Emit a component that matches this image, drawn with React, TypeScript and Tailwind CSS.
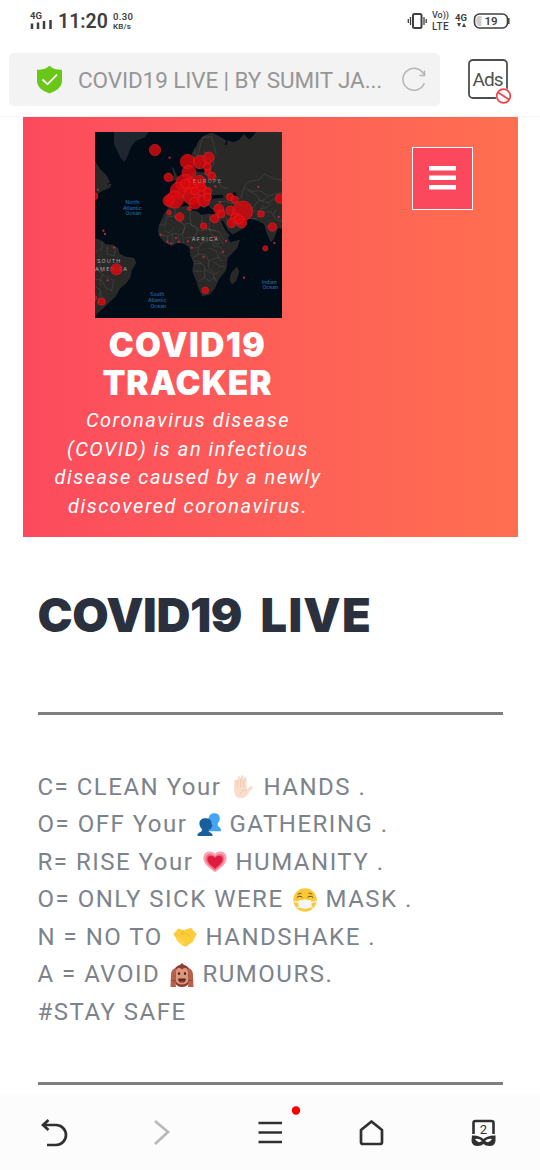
import React from "react";

const seaLabel = "fill-[#245c91] font-[Inter] text-[15px] font-semibold";
const landLabel = "fill-[#aaaaaa] font-[Inter] text-[16px]";

const cases: [number, number, number][] = [
  [195, 66, 17], [235, 148, 13], [293, 101, 22], [330, 102, 20], [356, 89, 17], [352, 117, 12], [353, 133, 9], [365, 144, 12],
  [297, 133, 21], [284, 166, 27], [265, 187, 24], [254, 215, 26], [236, 218, 17], [303, 175, 23], [305, 205, 25], [328, 160, 18],
  [330, 184, 20], [315, 225, 18], [342, 218, 18], [353, 190, 12], [352, 207, 12], [286, 167, 14], [315, 189, 12], [333, 177, 13],
  [237, 254, 7], [269, 267, 13], [298, 242, 6], [341, 294, 10], [374, 272, 13], [386, 243, 15], [393, 258, 12], [420, 207, 11],
  [434, 215, 11], [421, 248, 14], [458, 249, 30], [436, 270, 15], [425, 285, 14], [455, 285, 15], [447, 274, 14], [513, 258, 10],
  [569, 212, 14], [547, 297, 13], [526, 361, 8], [346, 487, 10], [79, 424, 17], [35, 521, 11], [14, 205, 10], [12, 510, 8],
];

const specks: [number, number][] = [
  [239, 89], [376, 175], [390, 222], [505, 177], [566, 267], [553, 345], [40, 308], [45, 318], [24, 185], [72, 358], [53, 457], [36, 428],
  [212, 320], [232, 341], [243, 346], [258, 330], [266, 342], [294, 340], [305, 359], [341, 387], [374, 328], [408, 339], [399, 372], [462, 449],
];

function WorldMap() {
  return (
    <svg className="ml-[1px] block h-[186px] w-[187px]" viewBox="15 12 561 558" preserveAspectRatio="none">
      <rect x="15" y="12" width="561" height="558" fill="#020c17" />
      <path d="M72 12H176L165 28 138 38 124 54 114 82 104 101 92 91 81 66 72 48Z" fill="#202630" />
      <g fill="#292928" stroke="#3d3d3c" strokeWidth="1.5" strokeLinejoin="round">
        <path d="M15 101 28 122 49 143 58 162 46 173 63 168 60 178 38 187 15 201Z" />
        <path d="M15 332 34 338 47 350 70 352 84 362 88 378 108 388 132 391 137 405 124 427 119 451 105 468 89 481 76 505 60 520 46 534 33 546 15 561Z" />
        <path d="M307 75 318 60 326 40 341 25 365 15 385 25 408 38 401 53 413 51 414 38 430 44 449 36 461 20 478 36 500 12H576V300L563 299 550 333 543 341 531 315 523 287 505 278 478 270 459 275 468 286 461 299 434 315 411 328 399 300 387 280 374 268 379 244 365 243 354 230 342 240 325 219 302 212 290 220 275 219 259 238 235 239 226 229 229 205 253 201 264 174 284 154 302 139 318 133 343 135 355 118 345 100 333 105 329 121 314 120Z" />
        <path d="M247 118 260 143 266 151 244 160 254 141Z" />
        <path d="M234 242 264 239 300 233 305 249 323 252 334 262 357 258 385 265 393 292 410 326 421 344 448 337 440 360 412 390 407 426 385 455 372 483 357 499 337 503 328 484 320 458 308 429 312 404 302 381 300 359 285 347 264 343 245 352 225 343 211 327 205 311 208 291 223 260Z" />
        <path d="M441 418 446 431 437 459 426 468 420 456 425 434Z" />
      </g>
      <g fill="none" stroke="#6a6668" strokeWidth="1.3" strokeOpacity=".72">
        <path d="M211 290 225 292 230 268 250 264 281 289 299 286 327 309 354 305 378 308M256 243 253 267 286 294 276 319 249 316 232 325 211 320M286 294 277 325 282 346M300 252 303 290 324 300 315 326 285 330M336 261V298L358 302 366 323 387 328 400 350M359 261 357 304 389 312 401 335M314 330 331 346 364 336 372 355 389 356 402 371M300 360 325 359 337 344M325 359 324 379 308 389M324 379 346 379 356 398 383 389 398 400M312 408 334 405 344 418 344 450 326 459M356 398 356 420 374 438 389 430M344 425 369 438 376 458M344 450 359 460 371 449 383 459M311 429 337 430" />
        <path d="M232 325 236 350M247 319 250 350M264 320 270 345M225 310 238 314 250 303M366 332 378 349 390 344M356 360 379 368 386 390M386 371 407 386M309 400 323 399 334 405M337 383 346 390M370 400 388 414 405 417" />
        <path d="M37 340 35 364 15 371M53 353 51 379 73 383 77 360M15 392 33 404 24 426 38 439 53 449 72 457 65 489M15 453 34 456 48 480 67 489M30 492 44 528M38 439 29 460 34 475M15 475 32 485 22 531" />
        <path d="M267 177 286 187 300 178 320 189 340 178 361 188M250 205 273 214 292 196 306 210 320 196 340 204 365 190M314 60 315 78 324 80 337 28 365 26 373 57 379 82M339 71 354 76 372 108 357 127 378 142 392 175 413 183" />
        <path d="M380 222 408 220 438 229 460 232 486 244 503 220 524 215 535 203 576 193M438 216 454 208 463 174 474 162 510 154 523 138 551 151 576 158M476 189 498 199 511 217 534 225 552 213M462 180 487 190 510 188 533 202M411 237 427 260 446 264 454 280M397 258 417 281 433 299M469 270 500 272 519 252 543 252 559 275 576 279M486 247 507 251 522 231M515 242 532 238 544 225M559 244 549 260" />
      </g>
      <g fill="none" stroke="#020c17" strokeLinecap="round">
        <path d="m397 281 14 27 21 22" strokeWidth="7" />
        <path d="m439 265 15 14 18-2" strokeWidth="5" />
        <path d="m370 207 25-2" strokeWidth="10" />
        <path d="m433 198 7 17" strokeWidth="10" />
        <path d="m324 216 21 18" strokeWidth="4" />
      </g>
      <text x="305" y="338" className={landLabel} textLength="79">AFRICA</text>
      <text x="21" y="404" className={landLabel} textLength="70">SOUTH</text>
      <text x="15" y="429" className={landLabel} textLength="96">AMERICA</text>
      <g fill="#db090d" fillOpacity=".82" stroke="#f02a2d" strokeWidth="2" strokeOpacity=".7">
        {cases.map(([x, y, r], i) => <circle key={i} cx={x} cy={y} r={r} />)}
      </g>
      <text x="309" y="166" className={landLabel} fillOpacity=".75" textLength="84">EUROPE</text>
      <g fill="#a52c3d">{specks.map(([x, y], i) => <circle key={i} cx={x} cy={y} r="3.5" />)}</g>
      <g className={seaLabel} textAnchor="middle">
        <text x="127" y="227">North</text><text x="127" y="245">Atlantic</text><text x="130" y="262">Ocean</text>
        <text x="202" y="504">South</text><text x="202" y="522">Atlantic</text><text x="205" y="540">Ocean</text>
        <text x="538" y="467">Indian</text><text x="541" y="484">Ocean</text>
      </g>
    </svg>
  );
}

function Hand() {
  return (
    <svg className="size-6" viewBox="0 0 24 24">
      <g fill="none" stroke="#fadcc9" strokeLinecap="round">
        <path d="M4.700 6v10M7.900 2.500V14M11.200 1.700V14M14.200 3.700V15" strokeWidth="2.700" />
        <path d="m13.500 19 6.800-6.400" strokeWidth="3" />
      </g>
      <path d="M3.400 11h12.200v6l3.300-2-1 2.500c-1.800 3.500-3.900 5.500-8.400 5.500-4.100 0-6.100-3-6.100-7Z" fill="#fadcc9" />
      <path d="M6.300 5v7M9.600 3.500V12M12.700 4.500V12M9.500 18.500c1.700-3 3.500-4 6-3.300" fill="none" stroke="#e6bfa9" strokeWidth=".8" />
    </svg>
  );
}

function People() {
  return (
    <svg className="size-6" viewBox="0 0 24 24">
      <path d="M17.300.3c4 0 6 2.700 5.400 6.100-.2 1.700-1 2.700-1.900 3.700v2.500c0 1.100 3.200 1.800 3.200 4.600v1H11V5.700l.6-.8C12.200 2 14.100.3 17.300.3Z" fill="#42a5f5" />
      <path d="M8.400 5.200c4.400 0 6.600 2.500 6.200 6l1.100 2.100-1.300.7c-.2 2-.8 2.700-2.700 2.700v1.600c.4 1.200 4 1.500 4 4.700H.4c0-3.700 4-3.900 4.400-5.300v-2c-1.400-1-2.400-2.900-2.400-5.100 0-3.400 2.300-5.400 6-5.400Z" fill="#1a5f9c" />
    </svg>
  );
}

function Heart() {
  return (
    <svg className="size-6" viewBox="0 0 24 24">
      <path d="M12 22.200C6 18 .3 13.600.3 7.900.3 1.400 8-.5 12 4 16-.5 23.700 1.400 23.700 7.900c0 5.700-5.700 10.100-11.700 14.300Z" fill="#f6a4b4" />
      <path d="M12 20.600C7.100 16.700 2.600 13 2.600 8.600c0-4.900 6.200-6.200 9.400-1.900 3.200-4.300 9.400-3 9.400 1.900 0 4.400-4.500 8.100-9.400 12Z" fill="#ef6981" />
      <path d="M12 18.800c-3.900-3.100-7.600-6.200-7.600-9.700 0-3.900 5.400-4.500 7.600-1 2.200-3.500 7.600-2.900 7.600 1 0 3.500-3.700 6.600-7.600 9.700Z" fill="#df1b3d" />
    </svg>
  );
}

function Mask() {
  return (
    <svg className="size-6" viewBox="0 0 24 24">
      <circle cx="12" cy="12" r="11.700" fill="#fcc936" />
      <path d="m.7 13.500 5.500 1M23.300 13.500l-5.500 1M3.500 20l4-1.700M20.500 20l-4-1.700" stroke="#e8edf0" strokeWidth="1.300" />
      <path d="M5.500 12.500c3.300-.2 4.300-1 6.500-1s3.200.8 6.500 1v6.300c-2 1.300-3.900 1.900-6.500 1.900s-4.500-.6-6.500-1.900Z" fill="#f3f6f7" />
      <path d="M4.200 9.200c1.500-1.300 3.700-1.300 5 0m5.600 0c1.300-1.300 3.500-1.300 5 0M5 6.200c1-.7 2-.9 3-.9M19 6.200c-1-.7-2-.9-3-.9" fill="none" stroke="#5b4637" strokeWidth="1" strokeLinecap="round" />
    </svg>
  );
}

function Handshake() {
  return (
    <svg className="size-6" viewBox="0 0 24 24">
      <path d="m.3 9 5-5.500 5.100 1.800 2-.6 5.500-2 5.800 6.500-3 5.300-.7 2.100-6 4.400-2.700.4-3-1.600-4.600-4.600-.7-2.300Z" fill="#fdcc3a" />
      <path d="m11 5-3 4c1.500 1 2.700.1 4-1.400l5.500 4" fill="none" stroke="#f0b22a" strokeWidth=".8" />
      <path d="m4 13 2-1 1 2 2-.5v2l2 .3-.2 2 1.700.4-1.300 2.100-3-1.200Z" fill="#ffd654" />
    </svg>
  );
}

function Monkey() {
  return (
    <svg className="size-6" viewBox="0 0 24 24">
      <path d="M4 9c0-4 3-6.500 6-7l2-2 2 2c3 .5 6 3 6 7l1 5-2 6c-2 3-4 4-7 4s-5-1-7-4l-2-6Z" fill="#8c3e33" />
      <path d="M6 7c1.500-2.500 4-2.500 6-.5 2-2 4.500-2 6 .5 1 2 .7 4 0 5.300 1.500 5.500-.5 9.200-6 9.200s-7.500-3.700-6-9.200C5.300 11 5 9 6 7Z" fill="#df967b" />
      <path d="M.5 24 1 12C1 7.500 3.500 5 5.600 5.500c1.300.3 1 2 .3 3.500L5.200 15l.8 9Z" fill="#b6614b" />
      <path d="m23.500 24-.5-12c0-4.500-2.500-7-4.600-6.500-1.300.3-1 2-.3 3.500l.7 6-.8 9Z" fill="#b6614b" />
      <path d="M1.200 17.500H5.500M22.800 17.500h-4.300" stroke="#8c3e33" strokeWidth=".8" />
      <ellipse cx="9" cy="10.500" rx="1.100" ry="1.600" fill="#372c2c" /><ellipse cx="15" cy="10.500" rx="1.100" ry="1.600" fill="#372c2c" />
      <path d="M8 15.500h8c-.5 3-1.600 4.300-4 4.300s-3.500-1.300-4-4.300Z" fill="#532b29" />
      <path d="M10 18.800c1-.8 3-.8 4 0-.8 1.100-3.200 1.100-4 0Z" fill="#ed4d4c" />
    </svg>
  );
}

const rows: { before: string; Icon: () => React.ReactElement; after: string; lead: string }[] = [
  { before: "C= CLEAN Your", Icon: Hand, after: "HANDS .", lead: "w-[193px]" },
  { before: "O= OFF Your", Icon: People, after: "GATHERING .", lead: "w-[159px]" },
  { before: "R= RISE Your", Icon: Heart, after: "HUMANITY .", lead: "w-[165px]" },
  { before: "O= ONLY SICK WERE", Icon: Mask, after: "MASK .", lead: "w-[255px]" },
  { before: "N = NO TO", Icon: Handshake, after: "HANDSHAKE .", lead: "w-[135px]" },
  { before: "A = AVOID", Icon: Monkey, after: "RUMOURS.", lead: "w-[132px]" },
];

function StatusBar() {
  return (
    <div className="flex h-[53px] items-start justify-between px-[30px] pt-[10px] text-[#3f3f3f]">
      <div className="flex">
        <div className="w-[28px] pt-[1px]">
          <div className="text-[9.500px] leading-[9px] font-bold">4G</div>
          <svg className="h-[10px] w-[22px]" viewBox="0 0 22 10"><path d="M2 3.500V9M8 2.500V9M14 1V9M20.500 0V9" stroke="currentColor" strokeWidth="2.500" /></svg>
        </div>
        <div className="w-[55px] pt-px text-[19.500px] leading-[22px] font-semibold">11:20</div>
        <div className="flex flex-col pt-px font-semibold"><div className="text-[9.500px] leading-[11px] tracking-[.3px]">0.30</div><div className="text-[8px] leading-[9.500px] tracking-[.2px]">KB/s</div></div>
      </div>
      <div className="flex">
        <svg className="mt-[2px] h-[18px] w-[20px]" viewBox="0 0 20 18" fill="none" stroke="currentColor"><rect x="6" y="2" width="8.500" height="14" rx="1.500" strokeWidth="2" /><path d="M3.500 5v8M17 5v8M1.300 7v4M19.200 7v4" strokeWidth="1.300" /></svg>
        <div className="ml-[5px] w-[22px] font-medium whitespace-nowrap"><div className="text-[9px] leading-[11px]">Vo))</div><div className="text-[10px] leading-[12px] tracking-[.3px]">LTE</div></div>
        <div className="ml-px w-[18px] pt-[3px] text-[9.500px] leading-[9px] font-bold"><div>4G</div><svg className="ml-[2px] h-[6px] w-[10px]" viewBox="0 0 10 6"><path d="M0 1h4L2 5ZM5 5h4L7 1Z" fill="currentColor" /></svg></div>
        <svg className="mt-[3px] h-[16px] w-[37px]" viewBox="0 0 37 16"><rect x="1.500" y="1" width="33" height="14" rx="5" fill="none" stroke="currentColor" strokeWidth="1.600" /><path d="M5.500 3h3v10h-3c-3 0-3-10 0-10Z" fill="#cecece" /><path d="M35.800 5v6" stroke="currentColor" strokeWidth="1.500" /><text x="18" y="12" textAnchor="middle" className="fill-current text-[11.500px] font-semibold">19</text></svg>
      </div>
    </div>
  );
}

export default function App() {
  return (
    <div className="flex h-[1170px] w-[540px] flex-col overflow-hidden bg-white font-[Roboto,sans-serif]">
      <StatusBar />
      <div className="flex h-[64px] shrink-0 items-start border-b border-[#f3f3f3] pl-[9px]">
        <div className="flex h-[53px] w-[431px] items-center rounded-[5px] bg-[#f3f3f3] pl-[27px]">
          <svg className="h-[29px] w-[27px]" viewBox="0 0 27 29"><path d="M13.500.7C17 3.800 20.500 4.700 26 4.800V16c0 6-5.200 9.800-12.500 12.400C6.200 25.800 1 22 1 16V4.800C6.500 4.700 10 3.800 13.500.7Z" fill="#69c717" /><path d="m6.500 14.500 5 4.800 9.500-9.700" fill="none" stroke="white" strokeWidth="1.800" /></svg>
          <span className="ml-[15px] w-[323px] pt-px text-[22.500px] leading-[30px] tracking-[-0.100px] whitespace-nowrap text-[#969696]">COVID19 LIVE | BY SUMIT JA...</span>
          <svg className="size-[26px]" viewBox="0 0 26 26" fill="none" stroke="#b5b5b5" strokeWidth="1.500"><path d="M22.700 7.200A11 11 0 1 0 23.300 16M23.500 3.500v5h-5" /></svg>
        </div>
        <svg className="mt-[5px] ml-[27px] h-[48px] w-[46px]" viewBox="0 0 46 48">
          <rect x="2" y="2" width="38" height="38" rx="4" fill="none" stroke="#4d4d4d" strokeWidth="1.800" />
          <text x="5.500" y="28" className="fill-[#505050] text-[19px]" textLength="31">Ads</text>
          <circle cx="36.500" cy="38" r="8" fill="white" /><circle cx="36.500" cy="38" r="6.800" fill="none" stroke="#f0444a" strokeWidth="1.700" /><path d="m31 34.500 11 7" stroke="#f0444a" strokeWidth="1.700" />
        </svg>
      </div>
      <header className="ml-[22.500px] flex h-[420px] w-[495px] shrink-0 items-start bg-linear-to-r from-[#fc4a5d] to-[#ff6f50]">
        <div className="flex w-[330px] flex-col items-center pt-[15px] text-center text-white">
          <WorldMap />
          <h2 className="mt-[8px] font-[Inter] text-[33.500px] leading-[38px] font-black tracking-[0.900px] whitespace-nowrap"><span className="tracking-[1.400px]">COVID19</span><br />TRACKER</h2>
          <p className="mt-[4px] ml-[1px] text-[20px] leading-[28.500px] tracking-[1.520px] whitespace-nowrap italic">Coronavirus disease<br />(COVID) is an infectious<br />disease caused by a newly<br />discovered coronavirus.</p>
        </div>
        <button className="mt-[30px] ml-[59.500px] flex h-[63px] w-[61px] items-center justify-center border-[1.500px] border-white bg-[#fb485d]" aria-label="Menu">
          <svg className="mb-[2px] h-[24px] w-[27px]" viewBox="0 0 27 24"><path d="M0 2.300h27M0 11.800h27M0 21.300h27" stroke="white" strokeWidth="4.500" /></svg>
        </button>
      </header>
      <main className="flex h-[557px] shrink-0 flex-col px-[37.500px]">
        <h1 className="mt-[50px] flex h-[56px] gap-[19px] font-[Inter] text-[47px] leading-[56px] font-black whitespace-nowrap text-[#2b303f]"><span className="w-[204px] tracking-[-0.400px]">COVID19 </span><span className="tracking-[1.300px]">LIVE</span></h1>
        <div className="mt-[69px] h-[3px] shrink-0 bg-[#7f7f7f]" />
        <div className="mt-[53.500px] text-[24px] leading-[37.500px] tracking-[1.500px] text-[#7d838b]">
          {rows.map(({ before, Icon, after, lead }) => (
            <div key={before} className="flex h-[37.500px] items-center whitespace-nowrap">
              <span className={lead}>{before}</span><Icon /><span className="pl-[9px]">{after}</span>
            </div>
          ))}
          <div>#STAY SAFE</div>
        </div>
        <div className="mt-[51px] h-[3px] shrink-0 bg-[#7f7f7f]" />
      </main>
      <nav className="flex h-[76px] shrink-0 bg-[#fcfcfc]">
        <svg className="h-[76px] w-[540px]" viewBox="0 0 540 76" fill="none" stroke="#303030" strokeWidth="2.700">
          <path d="M43 31h13a10 10 0 0 1 0 20h-9M48.500 26l-5.500 5 5.500 5" />
          <path d="m155 27 13 11-13 12" stroke="#b9b9b9" />
          <path d="M258.500 29h23.500M258.500 38.500h23.500M258.500 48h23.500" />
          <circle cx="296" cy="16.500" r="4.200" fill="#f70000" stroke="none" />
          <path d="m371.500 27.500 10.500 8.500V48q0 2-2 2h-17q-2 0-2-2V36Z" strokeLinejoin="round" />
          <path d="M473.500 40V29q0-2 2-2h16q2 0 2 2v11" strokeWidth="2.600" />
          <path d="M472 41.500q7-.5 11.500 3.500Q488 41 495.500 41.500v5.500q-.5 5-6 5-4 0-6-2-2 2-6 2-5.500 0-6-5Z" fill="#303030" stroke="none" />
          <path d="M475 45q4-1 7 2-4 3-7-2Zm17 0q-4-1-7 2 4 3 7-2Z" fill="white" stroke="none" />
          <text x="483.500" y="39.500" textAnchor="middle" className="fill-[#303030] stroke-none text-[13px]">2</text>
        </svg>
      </nav>
    </div>
  );
}
